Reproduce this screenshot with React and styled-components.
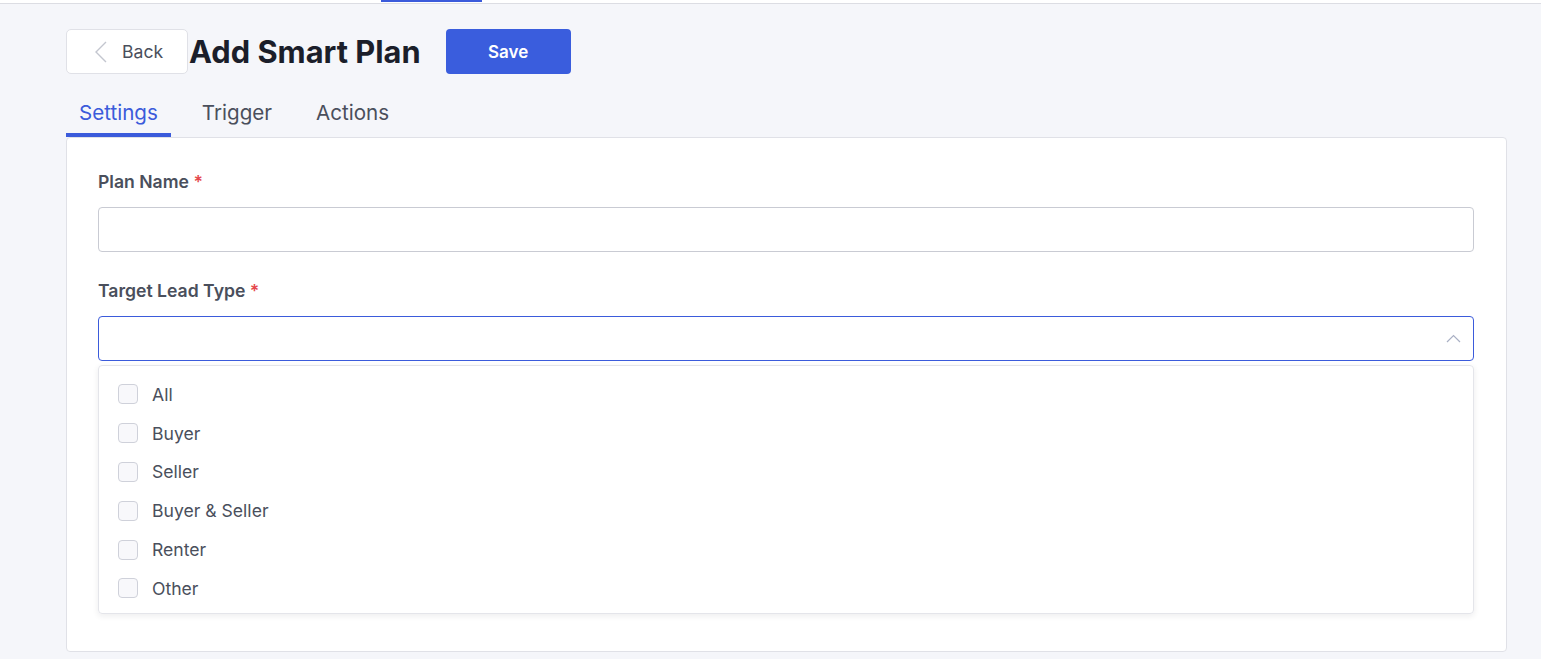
import styled, { createGlobalStyle } from "styled-components";

const GlobalStyle = createGlobalStyle`
    * { box-sizing: border-box; }
    body {
        margin: 0;
        background: #f5f6fa;
        font-family: 'Inter', 'Noto Sans', sans-serif;
        color: #4a4f5c;
    }
`

const leadTypes = ["All", "Buyer", "Seller", "Buyer & Seller", "Renter", "Other"];

export default function App() {
    return (
        <>
            <GlobalStyle />
            <TopStrip>
                <TopIndicator />
            </TopStrip>
            <Page>
                <Header>
                    <BackButton>
                        <svg width="12" height="22" viewBox="0 0 12 22" fill="none">
                            <path d="M11 1L1 11L11 21" stroke="#c3c6cf" strokeWidth="1.4" />
                        </svg>
                        Back
                    </BackButton>
                    <Title>Add Smart Plan</Title>
                    <SaveButton>Save</SaveButton>
                </Header>
                <Tabs>
                    <Tab active>Settings</Tab>
                    <Tab>Trigger</Tab>
                    <Tab>Actions</Tab>
                </Tabs>
                <Card>
                    <Field>
                        <Label>Plan Name <Required>*</Required></Label>
                        <Input />
                    </Field>
                    <Field>
                        <Label>Target Lead Type <Required>*</Required></Label>
                        <SelectBox>
                            <svg width="15" height="9" viewBox="0 0 15 9" fill="none">
                                <path d="M1 8L7.5 1.5L14 8" stroke="#a9b0c4" strokeWidth="1.2" />
                            </svg>
                        </SelectBox>
                        <Menu>
                            {leadTypes.map(type => (
                                <Option key={type}>
                                    <Box />
                                    <span>{type}</span>
                                </Option>
                            ))}
                        </Menu>
                    </Field>
                </Card>
            </Page>
        </>
    )
}

const TopStrip = styled.div`
    height: 4px;
    background: #fff;
    border-bottom: 1px solid #dcdde3;
    padding-left: 381px;
`

const TopIndicator = styled.div`
    width: 101px;
    height: 2px;
    background: #3b5bdb;
`

const Page = styled.div`
    padding: 25px 34px 0 66px;
`

const Header = styled.div`
    display: flex;
    align-items: center;
    height: 45px;
`

const BackButton = styled.button`
    display: flex;
    align-items: center;
    gap: 15px;
    width: 122px;
    height: 45px;
    padding: 0 0 0 28px;
    background: #fff;
    border: 1px solid #e0e1e7;
    border-radius: 5px;
    font-family: 'Inter', sans-serif;
    font-size: 17.6px;
    color: #4a4f5c;
`

const Title = styled.h1`
    margin: 0 25px 0 1px;
    font-size: 30.8px;
    font-weight: 700;
    color: #1b1e2a;
`

const SaveButton = styled.button`
    width: 125px;
    height: 45px;
    background: #3a5ddd;
    border: none;
    border-radius: 4px;
    color: #fff;
    font-family: 'Inter', sans-serif;
    font-size: 17px;
    font-weight: 600;
`

const Tabs = styled.div`
    display: flex;
    gap: 18px;
    margin-top: 18px;
`

const Tab = styled.div`
    padding: 8px 13px 7px;
    font-size: 20.6px;
    line-height: 26px;
    color: ${p => p.active ? "#3b5bdb" : "#4a4f5c"};
    border-bottom: 4px solid ${p => p.active ? "#3b5bdb" : "transparent"};
`

const Card = styled.div`
    background: #fff;
    border: 1px solid #e0e1e7;
    border-radius: 4px;
    height: 515px;
    padding: 33px 32px 0 31px;
    display: flex;
    flex-direction: column;
    gap: 28px;
`

const Field = styled.div`
    display: flex;
    flex-direction: column;
`

const Label = styled.div`
    font-size: 17.6px;
    line-height: 22px;
    font-weight: 600;
    color: #4a4f5c;
    margin-bottom: 14px;
`

const Required = styled.span`
    color: #e5484d;
`

const Input = styled.div`
    height: 45px;
    border: 1px solid #c9cbd3;
    border-radius: 4px;
`

const SelectBox = styled.div`
    height: 45px;
    border: 1px solid #3b5bdb;
    border-radius: 4px;
    display: flex;
    align-items: center;
    justify-content: flex-end;
    padding-right: 12px;
`

const Menu = styled.div`
    margin-top: 4px;
    border: 1px solid #e4e5ea;
    border-radius: 4px;
    box-shadow: 0 2px 6px rgba(20, 25, 40, 0.08);
    padding: 9px 0 5px 19px;
`

const Option = styled.div`
    display: flex;
    align-items: center;
    gap: 14px;
    height: 38.8px;
    font-size: 17.6px;
    color: #4a4f5c;
`

const Box = styled.div`
    width: 20px;
    height: 20px;
    border: 1px solid #cfd1da;
    border-radius: 4px;
    background: #f8f8fb;
`
